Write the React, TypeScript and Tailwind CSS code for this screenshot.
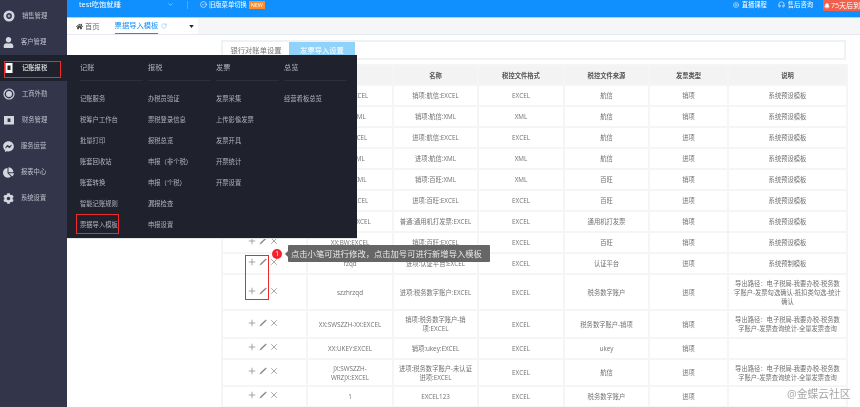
import { Plus, X, RotateCw, CircleCheck, CirclePlay, Headphones, Bell, ChevronDown } from 'lucide-react';
import { FaUser, FaHome, FaFacebookMessenger, FaChartPie, FaCog } from 'react-icons/fa';

const sideItems = ['销售管理', '客户管理', '记账报税', '工商外勤', '财务管理', '服务运营', '报表中心', '系统设置'];

const menuCols = [
  { title: '记账', items: ['记账服务', '税筹户工作台', '批量打印', '账套回收站', '账套转换', '智能记账规则', '票据导入模板'] },
  { title: '报税', items: ['办税员验证', '票税登录信息', '报税总览', '申报（非个税）', '申报（个税）', '漏报检查', '申报设置'] },
  { title: '发票', items: ['发票采集', '上传影像发票', '发票开具', '开票统计', '开票设置'] },
  { title: '总览', items: ['经营看板总览'] },
];

const path1 = '导出路径：电子税局-我要办税-税务数字账户-发票勾选确认-抵扣类勾选-统计确认';
const path2 = '导出路径：电子税局-我要办税-税务数字账户-发票查询统计-全量发票查询';
const preset = '系统预设模板';

const rows = [
  { h: 'h-[21px]', code: 'XX:HX:EXCEL', name: '销项:航信:EXCEL', fmt: 'EXCEL', src: '航信', type: '销项', desc: preset },
  { h: 'h-[21px]', code: 'XX:HX:XML', name: '销项:航信:XML', fmt: 'XML', src: '航信', type: '销项', desc: preset },
  { h: 'h-[21px]', code: 'JX:HX:EXCEL', name: '进项:航信:EXCEL', fmt: 'EXCEL', src: '航信', type: '进项', desc: preset },
  { h: 'h-[21px]', code: 'JX:HX:XML', name: '进项:航信:XML', fmt: 'XML', src: '航信', type: '进项', desc: preset },
  { h: 'h-[21px]', code: 'XX:BW:XML', name: '销项:百旺:XML', fmt: 'XML', src: '百旺', type: '销项', desc: preset },
  { h: 'h-[21px]', code: 'JX:BW:EXCEL', name: '进项:百旺:EXCEL', fmt: 'EXCEL', src: '百旺', type: '进项', desc: preset },
  { h: 'h-[21px]', code: 'PT:TYJD:EXCEL', name: '普通:通用机打发票:EXCEL', fmt: 'EXCEL', src: '通用机打发票', type: '销项', desc: preset },
  { h: 'h-[21px]', code: 'XX:BW:EXCEL', name: '销项:百旺:EXCEL', fmt: 'EXCEL', src: '百旺', type: '销项', desc: preset },
  { h: 'h-[21px]', code: 'rzqd', name: '进项:认证平台:EXCEL', fmt: 'EXCEL', src: '认证平台', type: '进项', desc: '系统预制模板' },
  { h: 'h-[36px]', code: 'szzhrzqd', name: '进项:税务数字账户:EXCEL', fmt: 'EXCEL', src: '税务数字账户', type: '进项', desc: path1 },
  { h: 'h-[28px]', code: 'XX:SWSZZH-XX:EXCEL', name: '销项:税务数字账户-销项:EXCEL', fmt: 'EXCEL', src: '税务数字账户-销项', type: '销项', desc: path2 },
  { h: 'h-[21px]', code: 'XX:UKEY:EXCEL', name: '销项:ukey:EXCEL', fmt: 'EXCEL', src: 'ukey', type: '销项', desc: '' },
  { h: 'h-[27px]', code: 'JX:SWSZZH-\nWRZJX:EXCEL', name: '进项:税务数字账户-未认证进项:EXCEL', fmt: 'EXCEL', src: '航信', type: '进项', desc: path2 },
  { h: 'h-[21px]', code: '1', name: 'EXCEL123', fmt: 'EXCEL', src: '税务数字账户', type: '进项', desc: '' },
];

function SideIcon({ index }: { index: number }) {
  if (index === 0) {
    return (
      <svg viewBox="0 0 12 12" className="w-[12px] h-[12px]">
        <circle cx="6" cy="6" r="4.2" fill="none" stroke="#d4d6de" strokeWidth="2.6" />
        <path d="M4.6 6h2.8M6 4.6v2.8" stroke="#d4d6de" strokeWidth="1" />
      </svg>
    );
  }
  if (index === 1) return <FaUser className="w-[11px] h-[11px] text-[#d4d6de]" />;
  if (index === 2) {
    return (
      <svg viewBox="0 0 12 12" className="w-[12px] h-[12px]">
        <rect x="2.5" y="1" width="7" height="10" fill="#ffffff" />
        <rect x="4.5" y="3.5" width="3" height="4.5" fill="#1f222d" />
      </svg>
    );
  }
  if (index === 3) {
    return (
      <svg viewBox="0 0 12 12" className="w-[12px] h-[12px]">
        <circle cx="6" cy="6" r="5" fill="none" stroke="#cfd1da" strokeWidth="1.2" />
        <circle cx="6" cy="6" r="3" fill="#cfd1da" />
      </svg>
    );
  }
  if (index === 4) {
    return (
      <svg viewBox="0 0 12 12" className="w-[12px] h-[12px]">
        <path d="M1 2h10v8.5H1z" fill="#d4d6de" />
        <rect x="4.6" y="4.4" width="2.8" height="3.6" fill="#33364a" />
      </svg>
    );
  }
  if (index === 5) return <FaFacebookMessenger className="w-[11px] h-[11px] text-[#d4d6de]" />;
  if (index === 6) return <FaChartPie className="w-[11px] h-[11px] text-[#d4d6de]" />;
  return <FaCog className="w-[11px] h-[11px] text-[#d4d6de]" />;
}

function Pen() {
  return (
    <svg viewBox="0 0 10 10" className="w-[8px] h-[8px]">
      <path d="M8.4 0.6 9.6 1.8 3.2 8.2 0.6 9.4 1.8 6.8z" fill="#8a8a8a" />
    </svg>
  );
}

function Actions() {
  return (
    <div className="flex items-center justify-center gap-[2px] pr-[3px] pb-[3px] text-[#8a8a8a]">
      <Plus className="w-[10px] h-[10px]" strokeWidth={1.8} />
      <Pen />
      <X className="w-[10px] h-[10px]" strokeWidth={1.8} />
    </div>
  );
}

const cell = 'border-2 border-[#f5f5f5] px-[4px] text-center align-middle whitespace-pre-line';

export default function App() {
  return (
    <div className="relative flex w-[860px] h-[407px] overflow-hidden bg-white font-['Open_Sans','Noto_Sans_CJK_SC',sans-serif] blur-[0.45px]">
      <aside className="w-[67px] shrink-0 bg-[#33364a] pt-[3px]">
        {sideItems.map((label, i) => (
          <div key={label} className={`flex items-center h-[26px] pl-[3px] gap-[7px] ${i === 2 ? 'bg-[#1f222d] text-white' : 'text-[#bfc2ce]'}`}>
            <SideIcon index={i} />
            <span className="text-[6.3px] leading-none">{label}</span>
          </div>
        ))}
      </aside>

      <div className="flex-1 min-w-0 flex flex-col">
        <header className="h-[18px] shrink-0 bg-[#1090ff] flex justify-between border-b border-[#a6d2fb] text-white">
          <div className="flex items-start pt-[1px]">
            <span className="w-[88px] ml-[12px] text-[7.3px] leading-[7px]">test吃饱就睡</span>
            <ChevronDown className="w-[7px] h-[7px] text-[#cfe6ff]" />
            <span className="ml-[13px] w-px h-[8px] bg-[#4aa8fb]" />
            <CircleCheck className="ml-[12px] w-[7px] h-[7px]" />
            <span className="ml-[2px] text-[6.3px] leading-[7px]">旧版菜单切换</span>
            <span className="ml-[2px] w-[16px] h-[8px] bg-[#ff8c2a] text-[5.5px] leading-[8px] text-center">NEW</span>
          </div>
          <div className="flex items-start pt-[1px]">
            <CirclePlay className="w-[6px] h-[6px] mt-[1px]" />
            <span className="ml-[3px] text-[6.3px] leading-[7px]">直播课程</span>
            <Headphones className="ml-[11px] w-[7px] h-[7px]" />
            <span className="ml-[3px] text-[6.3px] leading-[7px]">售后咨询</span>
            <span className="ml-[10px] -mt-[1px] w-[37px] h-[11px] bg-[#f0604d] flex items-center pl-[1px] overflow-hidden whitespace-nowrap">
              <Bell className="w-[6px] h-[6px] shrink-0" fill="white" />
              <span className="text-[7px] leading-none ml-[1px]">75天后到期</span>
            </span>
          </div>
        </header>

        <nav className="h-[17px] shrink-0 flex bg-[#f5f6f8] border-b border-[#e6e9ef]">
          <div className="w-[131px] bg-white flex items-center text-[7.3px]">
            <FaHome className="ml-[9px] w-[7px] h-[7px] text-[#444]" />
            <span className="ml-[2px] text-[#666]">首页</span>
            <span className="ml-[15px] h-full flex items-center text-[#1090ff] border-b border-[#1090ff]">票据导入模板</span>
            <RotateCw className="ml-[3px] w-[6px] h-[6px] text-[#7dbdf5]" />
            <svg viewBox="0 0 6 4" className="ml-[22px] w-[5px] h-[3px]">
              <path d="M0 0h6L3 4z" fill="#222" />
            </svg>
          </div>
        </nav>

        <main className="flex-1 min-h-0 pl-[154px] pr-[14px] pt-[5px] bg-white">
          <div className="flex h-[20px] border-2 border-[#f0f2f2] w-[625px] text-[7.3px]">
            <div className="w-[66px] flex items-center justify-center text-[#777]">银行对账单设置</div>
            <div className="w-[66px] flex items-center justify-center bg-[#8fd3fb] text-white">发票导入设置</div>
          </div>
          <table className="mt-[4px] w-[625px] table-fixed border-collapse text-[6.3px] leading-[9px] text-[#707070]">
            <colgroup>
              <col className="w-[85px]" />
              <col className="w-[86px]" />
              <col className="w-[85px]" />
              <col className="w-[86px]" />
              <col className="w-[85px]" />
              <col className="w-[79px]" />
              <col className="w-[119px]" />
            </colgroup>
            <thead>
              <tr className="h-[20px] bg-[#f3f3f3] text-[#555]">
                {['操作', '编码', '名称', '税控文件格式', '税控文件来源', '发票类型', '说明'].map((h) => (
                  <th key={h} className={`${cell} font-bold`}>{h}</th>
                ))}
              </tr>
            </thead>
            <tbody>
              {rows.map((r, i) => (
                <tr key={i} className={r.h}>
                  <td className={cell}><Actions /></td>
                  <td className={cell}>{r.code}</td>
                  <td className={cell}>{r.name}</td>
                  <td className={cell}>{r.fmt}</td>
                  <td className={cell}>{r.src}</td>
                  <td className={cell}>{r.type}</td>
                  <td className={cell}>{r.desc}</td>
                </tr>
              ))}
            </tbody>
          </table>
        </main>
      </div>

      {/* mega menu over the page */}
      <div className="absolute left-[67px] top-[55px] w-[290px] h-[184px] bg-[#1f222d] flex gap-[5px] pl-[13px] border-b border-[#e5e5e5]">
        {menuCols.map((col) => (
          <div key={col.title} className="w-[63px]">
            <div className="h-[26px] flex items-center border-b border-[#2b2f3c] text-[7.2px] text-[#b0b3be]">{col.title}</div>
            <div className="mt-[7px]">
              {col.items.map((item) => (
                <div key={item} className="h-[21px] flex items-center text-[6.3px] text-[#b0b3be] whitespace-nowrap">{item}</div>
              ))}
            </div>
          </div>
        ))}
      </div>

      {/* red annotation boxes */}
      <div className="absolute left-[4px] top-[61px] w-[57px] h-[17px] border-[1.5px] border-[#f02a2a]" />
      <div className="absolute left-[76px] top-[214px] w-[43px] h-[20px] border-[1.5px] border-[#f02a2a]" />
      <div className="absolute left-[245px] top-[255px] w-[24px] h-[45px] border-[1.5px] border-[#f02a2a]" />

      <div className="absolute left-[272px] top-[249px] w-[10px] h-[10px] rounded-full bg-[#f5222d] text-white text-[6.5px] leading-[10px] text-center">1</div>
      <div className="absolute left-[288px] top-[245px] h-[17px] w-[202px] rounded-[1px] bg-[#666666] text-[#e8e8e8] text-[8.3px] leading-[17px] pl-[3px] whitespace-nowrap">
        点击小笔可进行修改，点击加号可进行新增导入模板
      </div>
      <div className="absolute left-[285px] top-[251px] w-0 h-0 border-y-[3px] border-y-transparent border-r-[3px] border-r-[#666666]" />

      <div className="absolute left-[787px] top-[387px] text-[10.8px] leading-[14px] text-[#a8a8a8]">@金蝶云社区</div>
    </div>
  );
}
